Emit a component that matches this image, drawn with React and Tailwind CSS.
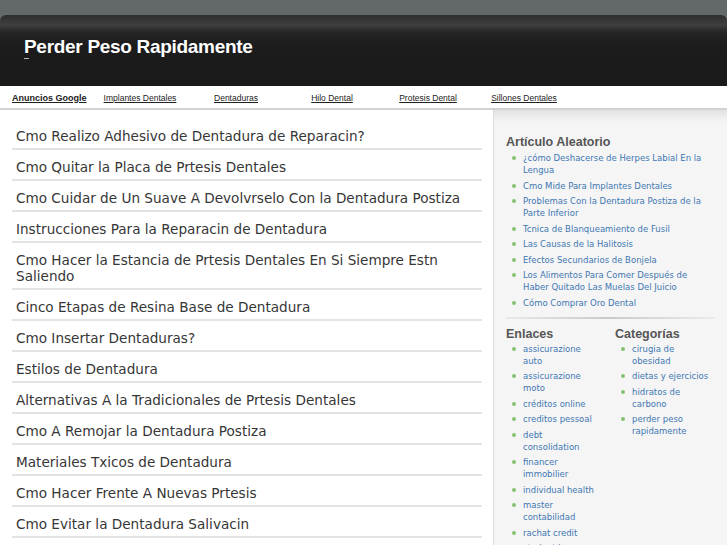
import React from "react";

const posts = [
  "Cmo Realizo Adhesivo de Dentadura de Reparacin?",
  "Cmo Quitar la Placa de Prtesis Dentales",
  "Cmo Cuidar de Un Suave A Devolvrselo Con la Dentadura Postiza",
  "Instrucciones Para la Reparacin de Dentadura",
  "Cmo Hacer la Estancia de Prtesis Dentales En Si Siempre Estn Saliendo",
  "Cinco Etapas de Resina Base de Dentadura",
  "Cmo Insertar Dentaduras?",
  "Estilos de Dentadura",
  "Alternativas A la Tradicionales de Prtesis Dentales",
  "Cmo A Remojar la Dentadura Postiza",
  "Materiales Txicos de Dentadura",
  "Cmo Hacer Frente A Nuevas Prtesis",
  "Cmo Evitar la Dentadura Salivacin",
];

const random = [
  "¿cómo Deshacerse de Herpes Labial En la Lengua",
  "Cmo Mide Para Implantes Dentales",
  "Problemas Con la Dentadura Postiza de la Parte Inferior",
  "Tcnica de Blanqueamiento de Fusil",
  "Las Causas de la Halitosis",
  "Efectos Secundarios de Bonjela",
  "Los Alimentos Para Comer Después de Haber Quitado Las Muelas Del Juicio",
  "Cómo Comprar Oro Dental",
];

const enlaces = [
  "assicurazione auto",
  "assicurazione moto",
  "créditos online",
  "creditos pessoal",
  "debt consolidation",
  "financer immobilier",
  "individual health",
  "master contabilidad",
  "rachat credit",
  "student loans",
];

const categorias = [
  "cirugia de obesidad",
  "dietas y ejercicios",
  "hidratos de carbono",
  "perder peso rapidamente",
];

const navLinks = [
  "Implantes Dentales",
  "Dentaduras",
  "Hilo Dental",
  "Protesis Dental",
  "Sillones Dentales",
];

const SideList = ({ items, textWidth }) => (
  <ul className="flex flex-col gap-[3.5px]">
    {items.map((item) => (
      <li key={item} className="flex items-start">
        <span className="ml-[6px] mt-[4px] w-[4px] h-[4px] rounded-full bg-[#86c275] shrink-0"></span>
        <a
          href="#"
          className="ml-[7px] text-[8.5px] leading-[12px] text-[#3f78b3] font-['DejaVu_Sans',sans-serif]"
          style={{ width: textWidth }}
        >
          {item}
        </a>
      </li>
    ))}
  </ul>
);

export default function App() {
  return (
    <div className="w-[727px] h-[545px] overflow-hidden bg-white">
      {/* top strip */}
      <div className="bg-[#63686a]">
        <div className="h-[15px]"></div>

        {/* Header */}
        <header className="h-[71px] rounded-t-[6px] bg-[linear-gradient(to_bottom,#2e2e2e_0px,#3f3f3f_10px,#262626_17px,#1c1c1c_30px,#1a1a1a_100%)] pl-6 pt-[20px]">
          <h1 className="font-['Liberation_Sans',Arial,sans-serif] font-bold text-[19px] leading-[24px] tracking-[-0.3px] text-white">
            Perder Peso Rapidamente
          </h1>
          <div className="w-[5px] h-px bg-[#bbb] mt-[-1px]"></div>
        </header>
      </div>

      {/* Nav */}
      <nav className="h-[24px] flex items-center border-b-2 border-[#d2d2d2] bg-white font-['Liberation_Sans',Arial,sans-serif] text-[#222]">
        <div className="w-[92px] pl-3 pb-[3px]">
          <a href="#" className="text-[9px] font-bold underline">
            Anuncios Google
          </a>
        </div>
        {navLinks.map((link) => (
          <div key={link} className="w-[96px] text-center pb-[3px]">
            <a href="#" className="text-[8.5px] underline">
              {link}
            </a>
          </div>
        ))}
      </nav>

      <div className="flex">
        {/* Main list */}
        <main className="w-[493px] pl-3 pr-[11px] pt-[9px] font-['DejaVu_Sans',sans-serif]">
          {posts.map((post) => (
            <h2
              key={post}
              className="pl-1 pt-[9px] pb-[4px] border-b-2 border-[#e4e4e4] text-[13.6px] leading-[16px] text-[#363636]"
            >
              {post}
            </h2>
          ))}
        </main>

        {/* Sidebar */}
        <aside className="flex-1 h-[440px] bg-[#f5f5f5] border-l border-[#dadada]">
          <div className="h-3 bg-gradient-to-b from-[#e2e2e2] to-[#f5f5f5]"></div>
          <div className="px-3 pt-[13px]">
            <h3 className="font-['Liberation_Sans',Arial,sans-serif] font-bold text-[12.5px] leading-[15px] text-[#555] mb-[2px]">
              Artículo Aleatorio
            </h3>
            <SideList items={random} textWidth={190} />
          </div>
          <div className="mx-3 mt-[8px] h-[2px] bg-gradient-to-r from-[#e8e8e8] via-[#cacaca] to-[#ececec]"></div>
          <div className="flex pl-3 pt-[8px]">
            <div className="w-[109px]">
              <h3 className="font-['Liberation_Sans',Arial,sans-serif] font-bold text-[12.5px] leading-[15px] text-[#555] mb-[1px]">
                Enlaces
              </h3>
              <SideList items={enlaces} textWidth={76} />
            </div>
            <div className="flex-1">
              <h3 className="font-['Liberation_Sans',Arial,sans-serif] font-bold text-[12.5px] leading-[15px] text-[#555] mb-[1px]">
                Categorías
              </h3>
              <SideList items={categorias} textWidth={78} />
            </div>
          </div>
        </aside>
      </div>
    </div>
  );
}
